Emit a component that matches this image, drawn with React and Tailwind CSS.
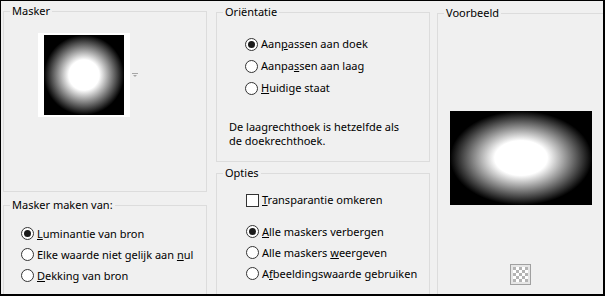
import React from 'react';

function Group({ title, className = '', children }) {
  return (
    <div className={`relative border border-[#dcdcdc] shrink-0 ${className}`}>
      <span className="absolute left-[6px] top-[-8px] px-[2px] bg-[#f0f0f0] leading-[14px] whitespace-nowrap">
        {title}
      </span>
      {children}
    </div>
  );
}

function Radio({ checked, children, h = 'h-[22px]' }) {
  return (
    <div className={`flex items-center gap-[3px] ${h}`}>
      <span className="w-[13px] h-[13px] rounded-full border border-[#333333] bg-white flex items-center justify-center shrink-0">
        {checked && <span className="w-[7px] h-[7px] rounded-full bg-[#1a1a1a]" />}
      </span>
      <span className="leading-[14px] whitespace-nowrap">{children}</span>
    </div>
  );
}

function Checkbox({ children }) {
  return (
    <div className="flex items-center gap-[3px] h-[22px]">
      <span className="w-[13px] h-[13px] border border-[#333333] bg-white shrink-0" />
      <span className="leading-[14px] whitespace-nowrap">{children}</span>
    </div>
  );
}

export default function App() {
  return (
    <div className="w-[605px] h-[296px] overflow-hidden bg-[#f0f0f0] border-black border-t border-l border-r-2 border-b-2 font-['Noto_Sans',sans-serif] text-[11px] text-black flex">
      {/* left column */}
      <div className="ml-[2px] pt-[10px] w-[204px] shrink-0 flex flex-col">
        <Group title="Masker" className="h-[181px]">
          <div className="pt-[21px] pl-[34px] flex items-center">
            <div className="w-[92px] h-[84px] bg-white px-[6px] py-[2px]">
              <div className="w-[80px] h-[80px] bg-[radial-gradient(circle_closest-side,#fff_38%,#000_100%)]" />
            </div>
            <svg width="6" height="4" viewBox="0 0 6 4" className="ml-[2px]">
              <rect x="0" y="0" width="6" height="1" fill="#a6a6a6" />
              <polygon points="1,2 5,2 3,4" fill="#a6a6a6" />
            </svg>
          </div>
        </Group>
        <Group title="Masker maken van:" className="mt-[13px] h-[140px]">
          <div className="pt-[17px] pl-[17px]">
            <Radio checked h="h-[21px]">
              <u>L</u>uminantie van bron
            </Radio>
            <Radio h="h-[21px]">
              Elke waarde niet gelijk aan <u>n</u>ul
            </Radio>
            <Radio h="h-[21px]">
              <u>D</u>ekking van bron
            </Radio>
          </div>
        </Group>
      </div>

      {/* middle column */}
      <div className="ml-[9px] pt-[11px] w-[214px] shrink-0 flex flex-col">
        <Group title="Oriëntatie" className="h-[150px]">
          <div className="pt-[20px] pl-[28px]">
            <Radio checked>
              Aan<u>p</u>assen aan doek
            </Radio>
            <Radio>
              Aanpa<u>s</u>sen aan laag
            </Radio>
            <Radio>
              <u>H</u>uidige staat
            </Radio>
          </div>
          <p className="mt-[21px] pl-[12px] leading-[14px]">
            De laagrechthoek is hetzelfde als
            <br />
            de doekrechthoek.
          </p>
        </Group>
        <Group title="Opties" className="mt-[11px] h-[140px]">
          <div className="pt-[15px] pl-[29px]">
            <Checkbox>
              <u>T</u>ransparantie omkeren
            </Checkbox>
            <div className="mt-[10px]">
              <Radio checked h="h-[21px]">
                <u>A</u>lle maskers verbergen
              </Radio>
              <Radio h="h-[21px]">
                Alle maskers <u>w</u>eergeven
              </Radio>
              <Radio h="h-[21px]">
                A<u>f</u>beeldingswaarde gebruiken
              </Radio>
            </div>
          </div>
        </Group>
      </div>

      {/* right column */}
      <div className="ml-[7px] pt-[12px] w-[180px] shrink-0">
        <Group title="Voorbeeld" className="h-[300px]">
          <div className="pt-[97px] pl-[12px]">
            <div className="w-[142px] h-[94px] bg-[radial-gradient(closest-side,#fff_37%,#000_100%)]" />
            <div className="mt-[59px] ml-[60px] w-[21px] h-[21px] border border-[#a0a0a0] bg-[#e6e6e6] p-[2px]">
              <svg width="15" height="15" viewBox="0 0 15 15">
                <rect width="15" height="15" fill="#ffffff" />
                {[0, 1, 2, 3, 4].map((r) =>
                  [0, 1, 2, 3, 4].map((c) =>
                    (r + c) % 2 === 0 ? (
                      <rect key={`${r}-${c}`} x={c * 3} y={r * 3} width="3" height="3" fill="#b4b4b4" />
                    ) : null
                  )
                )}
              </svg>
            </div>
          </div>
        </Group>
      </div>
    </div>
  );
}
